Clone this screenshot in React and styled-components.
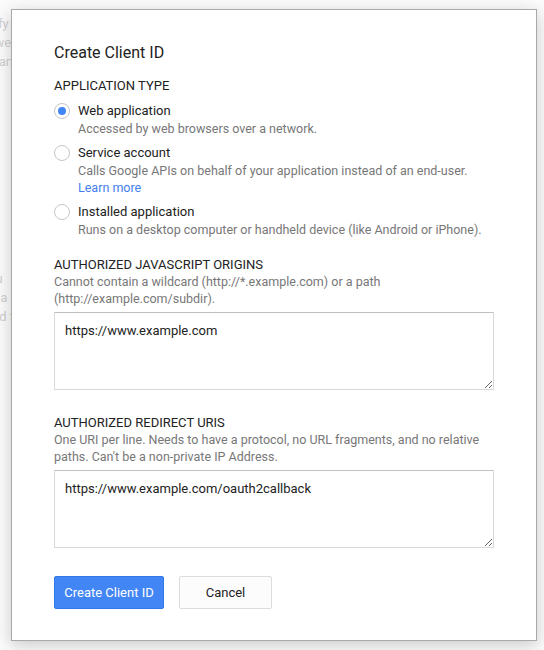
import React from "react";
import styled, { createGlobalStyle } from "styled-components";

const GlobalStyle = createGlobalStyle`
  html, body {
    margin: 0;
    padding: 0;
    background: #fbfbfb;
    font-family: Roboto, "Liberation Sans", Arial, sans-serif;
    overflow: hidden;
  }
  * { box-sizing: border-box; }
`;

const Page = styled.div`
  position: relative;
  width: 544px;
  height: 650px;
`;

const Backdrop = styled.div`
  padding-top: 14px;
  margin-left: -34px;
  color: #cfcfcf;
  font-size: 13px;
  line-height: 19px;
`;

const BackdropBlock = styled.div`
  margin-bottom: ${p => p.gap || 0}px;
`;

const Dialog = styled.div`
  position: absolute;
  left: 11px;
  top: 9px;
  width: 526px;
  height: 632px;
  background: #fff;
  border: 1px solid #a9a9a9;
  box-shadow: 0 4px 16px rgba(0, 0, 0, 0.2);
  padding: 33px 42px 0 42px;
  color: #222;
`;

const Title = styled.h2`
  margin: 0;
  font-size: 16px;
  line-height: 20px;
  font-weight: 400;
  color: #222;
`;

const SectionHead = styled.div`
  margin-top: ${p => p.top}px;
  font-size: 13px;
  line-height: 17px;
  text-transform: uppercase;
  color: #222;
`;

const Hint = styled.div`
  font-size: 12.5px;
  line-height: 17px;
  color: #777;
  white-space: nowrap;
`;

const RadioList = styled.div`
  margin-top: 8px;
  display: flex;
  flex-direction: column;
  gap: 7px;
`;

const RadioRow = styled.label`
  display: flex;
  align-items: flex-start;
  gap: 8px;
`;

const RadioCircle = styled.span`
  flex: none;
  width: 16px;
  height: 16px;
  margin-top: 1px;
  border-radius: 50%;
  border: 1px solid #c6c6c6;
  background: #fff;
  display: flex;
  align-items: center;
  justify-content: center;

  &::after {
    content: "";
    width: 8px;
    height: 8px;
    border-radius: 50%;
    background: ${p => (p.checked ? "#4285f4" : "transparent")};
  }
`;

const RadioText = styled.div`
  display: flex;
  flex-direction: column;
`;

const RadioLabel = styled.div`
  font-size: 13px;
  line-height: 18px;
  color: #222;
`;

const LearnMore = styled.a`
  font-size: 12.5px;
  line-height: 17px;
  color: #427fed;
  text-decoration: none;
`;

const TextBox = styled.textarea`
  display: block;
  margin-top: 5px;
  width: 440px;
  height: 78px;
  padding: 9px 10px;
  border: 1px solid #d9d9d9;
  border-top-color: #c0c0c0;
  border-radius: 1px;
  font-family: Roboto, "Liberation Sans", Arial, sans-serif;
  font-size: 13px;
  line-height: 18px;
  color: #222;
  resize: both;
  outline: none;
`;

const Actions = styled.div`
  margin-top: 28px;
  display: flex;
  gap: 15px;
`;

const Button = styled.button`
  height: 33px;
  width: ${p => p.w}px;
  padding: 0;
  white-space: nowrap;
  border-radius: 2px;
  font-family: Roboto, "Liberation Sans", Arial, sans-serif;
  font-size: 13px;
  cursor: pointer;
  border: 1px solid ${p => (p.primary ? "#3079ed" : "#dcdcdc")};
  background: ${p => (p.primary ? "#4285f4" : "#fcfcfc")};
  color: ${p => (p.primary ? "#fff" : "#222")};
`;

const types = [
  {
    id: "web",
    label: "Web application",
    hint: "Accessed by web browsers over a network.",
    checked: true,
  },
  {
    id: "service",
    label: "Service account",
    hint: "Calls Google APIs on behalf of your application instead of an end-user.",
    link: "Learn more",
  },
  {
    id: "installed",
    label: "Installed application",
    hint: "Runs on a desktop computer or handheld device (like Android or iPhone).",
  },
];

export default function App() {
  return (
    <Page>
      <GlobalStyle />
      <Backdrop>
        <BackdropBlock gap={198}>
          <div>Specify</div>
          <div>Dew web</div>
          <div>APIs, an</div>
        </BackdropBlock>
        <BackdropBlock>
          <div>Your u</div>
          <div>Go to a</div>
          <div>Ad and fi</div>
        </BackdropBlock>
      </Backdrop>

      <Dialog role="dialog">
        <Title>Create Client ID</Title>

        <SectionHead top={14}>Application type</SectionHead>
        <RadioList>
          {types.map(t => (
            <RadioRow key={t.id}>
              <RadioCircle checked={t.checked} />
              <RadioText>
                <RadioLabel>{t.label}</RadioLabel>
                <Hint>{t.hint}</Hint>
                {t.link && <LearnMore href="#">{t.link}</LearnMore>}
              </RadioText>
            </RadioRow>
          ))}
        </RadioList>

        <SectionHead top={18}>Authorized JavaScript origins</SectionHead>
        <Hint>
          Cannot contain a wildcard (http://*.example.com) or a path
          <br />
          (http://example.com/subdir).
        </Hint>
        <TextBox defaultValue="https://www.example.com" />

        <SectionHead top={24}>Authorized redirect URIs</SectionHead>
        <Hint>
          One URI per line. Needs to have a protocol, no URL fragments, and no relative
          <br />
          paths. Can't be a non-private IP Address.
        </Hint>
        <TextBox defaultValue="https://www.example.com/oauth2callback" />

        <Actions>
          <Button primary w={110}>Create Client ID</Button>
          <Button w={93}>Cancel</Button>
        </Actions>
      </Dialog>
    </Page>
  );
}
